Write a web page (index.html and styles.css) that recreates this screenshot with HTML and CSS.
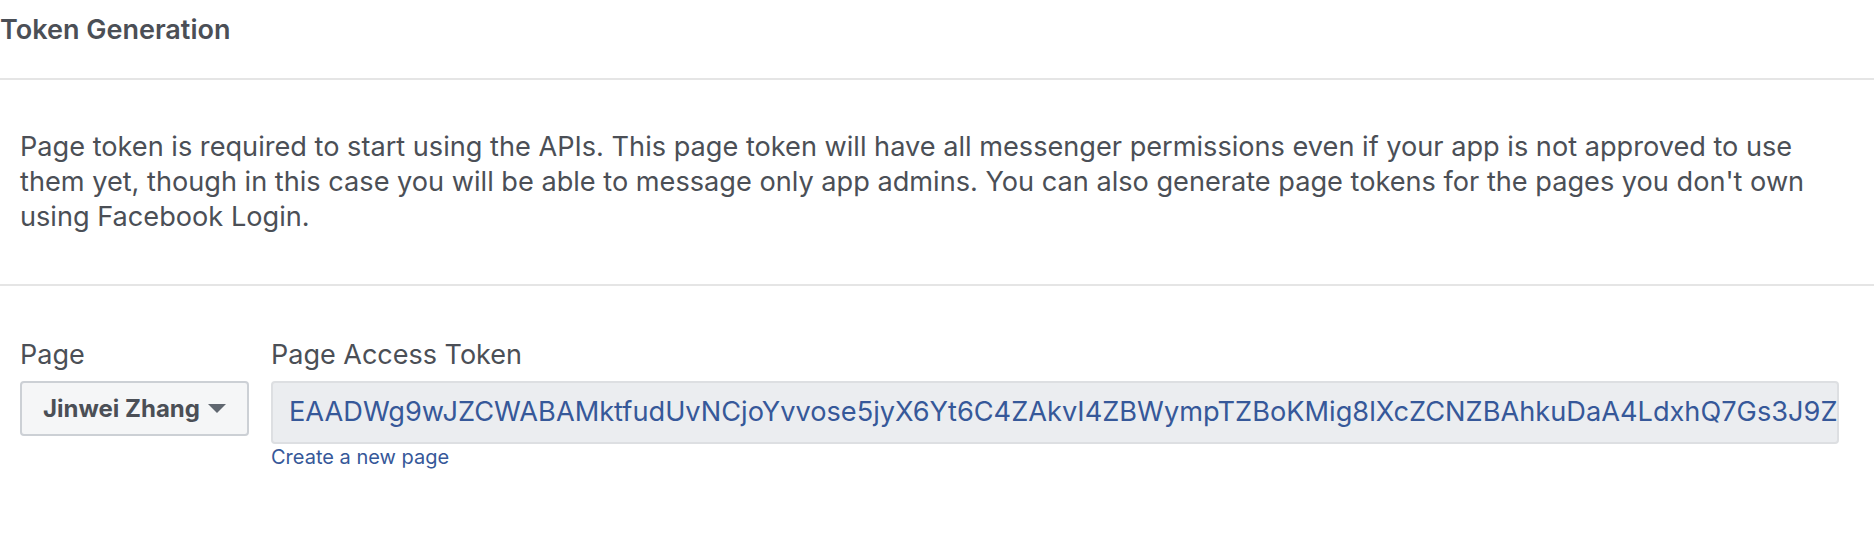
FILE: index.html
```html
<!DOCTYPE html>
<html lang="en">
<head>
<meta charset="utf-8">
<title>Token Generation</title>
<link rel="stylesheet" href="styles.css">
</head>
<body>
<div class="panel">
  <header class="panel-head">
    <h2 class="title">Token Generation</h2>
  </header>
  <section class="panel-body">
    <p class="desc">Page token is required to start using the APIs. This page token will have all messenger permissions even if your app is not approved to use them yet, though in this case you will be able to message only app admins. You can also generate page tokens for the pages you don't own using Facebook Login.</p>
  </section>
  <section class="form-row">
    <div class="field field-page">
      <label class="field-label">Page</label>
      <button class="select" type="button">
        <span class="select-text">Jinwei Zhang</span>
        <svg class="caret" width="18" height="9" viewBox="0 0 18 9"><path d="M0 0H18L9 9Z" fill="#606770"/></svg>
      </button>
    </div>
    <div class="field field-token">
      <label class="field-label">Page Access Token</label>
      <div class="token-input"><span class="token-text">EAADWg9wJZCWABAMktfudUvNCjoYvvose5jyX6Yt6C4ZAkvI4ZBWympTZBoKMig8lXcZCNZBAhkuDaA4LdxhQ7Gs3J9Z</span></div>
      <a class="link" href="#">Create a new page</a>
    </div>
  </section>
</div>
</body>
</html>
```

FILE: styles.css
```css
* { box-sizing: border-box; }
html, body { margin: 0; padding: 0; background: #fff; }
body {
  font-family: Inter, "Liberation Sans", sans-serif;
  color: #4b4f56;
  width: 1874px;
  height: 536px;
  overflow: hidden;
}
.panel { display: flex; flex-direction: column; }
.panel-head {
  height: 80px;
  padding-top: 16px;
  border-bottom: 2px solid #e5e5e5;
}
.title {
  margin: 0;
  font-size: 27px;
  line-height: 28px;
  font-weight: 600;
  color: #4b4f56;
}
.panel-body {
  padding: 49px 20px 50px 20px;
  border-bottom: 2px solid #e5e5e5;
}
.desc {
  margin: 0;
  font-size: 27.15px;
  line-height: 35px;
  color: #4b4f56;
}
.form-row {
  display: flex;
  gap: 22px;
  padding: 51px 35px 0 20px;
}
.field { display: flex; flex-direction: column; }
.field-token { flex: 1; min-width: 0; }
.field-label {
  font-size: 27px;
  line-height: 35px;
  color: #4b4f56;
  margin-bottom: 9px;
}
.select {
  display: flex;
  align-items: center;
  gap: 8px;
  width: 229px;
  height: 55px;
  padding: 0 20px 0 21px;
  background: #f5f6f7;
  border: 2px solid #ccd0d5;
  border-radius: 4px;
  font-family: inherit;
  font-size: 24px;
  font-weight: 700;
  color: #4b4f56;
  white-space: nowrap;
}
.caret { flex: none; }
.token-input {
  height: 63px;
  display: flex;
  align-items: center;
  padding: 0 0 0 16px;
  background: #ebedf0;
  border: 2px solid #dddfe2;
  border-radius: 4px;
  overflow: hidden;
  white-space: nowrap;
}
.token-text {
  font-size: 27.2px;
  color: #365899;
  margin-top: -3px;
}
.link {
  font-size: 20px;
  line-height: 26px;
  color: #365899;
  text-decoration: none;
  align-self: flex-start;
}
```
